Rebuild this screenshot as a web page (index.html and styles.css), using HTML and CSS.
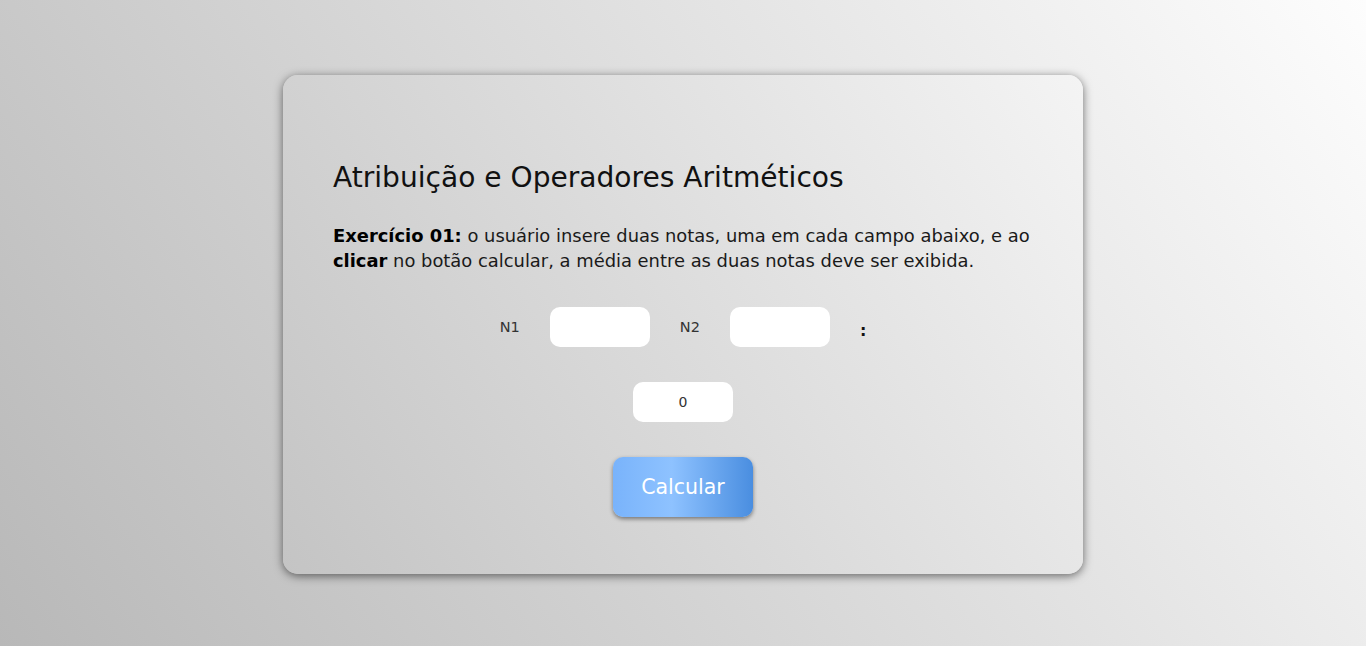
FILE: index.html
```html
<!DOCTYPE html>
<html lang="pt-BR">
<head>
<meta charset="utf-8">
<title>Atribuição e Operadores Aritméticos</title>
<link rel="stylesheet" href="styles.css">
</head>
<body>
  <main class="card">
    <h1 class="title">Atribuição e Operadores Aritméticos</h1>
    <p class="desc"><strong>Exercício 01:</strong> o usuário insere duas notas, uma em cada campo abaixo, e ao <strong>clicar</strong> no botão calcular, a média entre as duas notas deve ser exibida.</p>
    <div class="row">
      <label class="lbl" for="n1">N1</label>
      <input class="field" id="n1" type="text">
      <label class="lbl" for="n2">N2</label>
      <input class="field" id="n2" type="text">
      <span class="colon">:</span>
    </div>
    <input class="field result" type="text" value="0" readonly>
    <button class="btn" type="button">Calcular</button>
  </main>
</body>
</html>
```

FILE: styles.css
```css
html, body {
  margin: 0;
  height: 100%;
}
body {
  display: flex;
  align-items: center;
  justify-content: center;
  background: linear-gradient(56deg, #b8b8b8 0%, #fdfdfd 100%);
  font-family: "DejaVu Sans", sans-serif;
  color: #111;
}
.card {
  box-sizing: border-box;
  width: 800px;
  height: 499px;
  margin-top: 2px;
  padding: 85px 50px 0;
  border-radius: 15px;
  background: linear-gradient(58deg, #c4c4c4 0%, #f4f4f4 100%);
  box-shadow: 0 2px 10px rgba(0, 0, 0, 0.55);
  display: flex;
  flex-direction: column;
  align-items: center;
}
.title {
  align-self: stretch;
  margin: 0;
  font-size: 28.1px;
  line-height: 36px;
  font-weight: normal;
  color: #111;
}
.desc {
  align-self: stretch;
  margin: 27px 0 0;
  font-size: 17.9px;
  line-height: 25px;
  color: #1a1a1a;
}
.desc strong {
  color: #000;
}
.row {
  margin-top: 34px;
  display: flex;
  align-items: center;
  gap: 30px;
  height: 40px;
}
.lbl {
  font-size: 14.5px;
  color: #333;
}
.field {
  box-sizing: border-box;
  width: 100px;
  height: 40px;
  border: none;
  border-radius: 10px;
  background: #fff;
  outline: none;
  font-family: inherit;
  font-size: 14px;
  text-align: center;
  color: #333;
}
.colon {
  font-size: 16px;
  font-weight: bold;
  margin-top: 8px;
}
.result {
  margin-top: 35px;
}
.btn {
  margin-top: 35px;
  width: 140px;
  height: 60px;
  border: none;
  border-radius: 10px;
  background: linear-gradient(to right, #79b3fb 0%, #8ec2ff 42%, #4a8ee0 100%);
  box-shadow: 0 2px 4px rgba(0, 0, 0, 0.45);
  color: #fff;
  font-family: inherit;
  font-size: 20.5px;
  cursor: pointer;
}
```
